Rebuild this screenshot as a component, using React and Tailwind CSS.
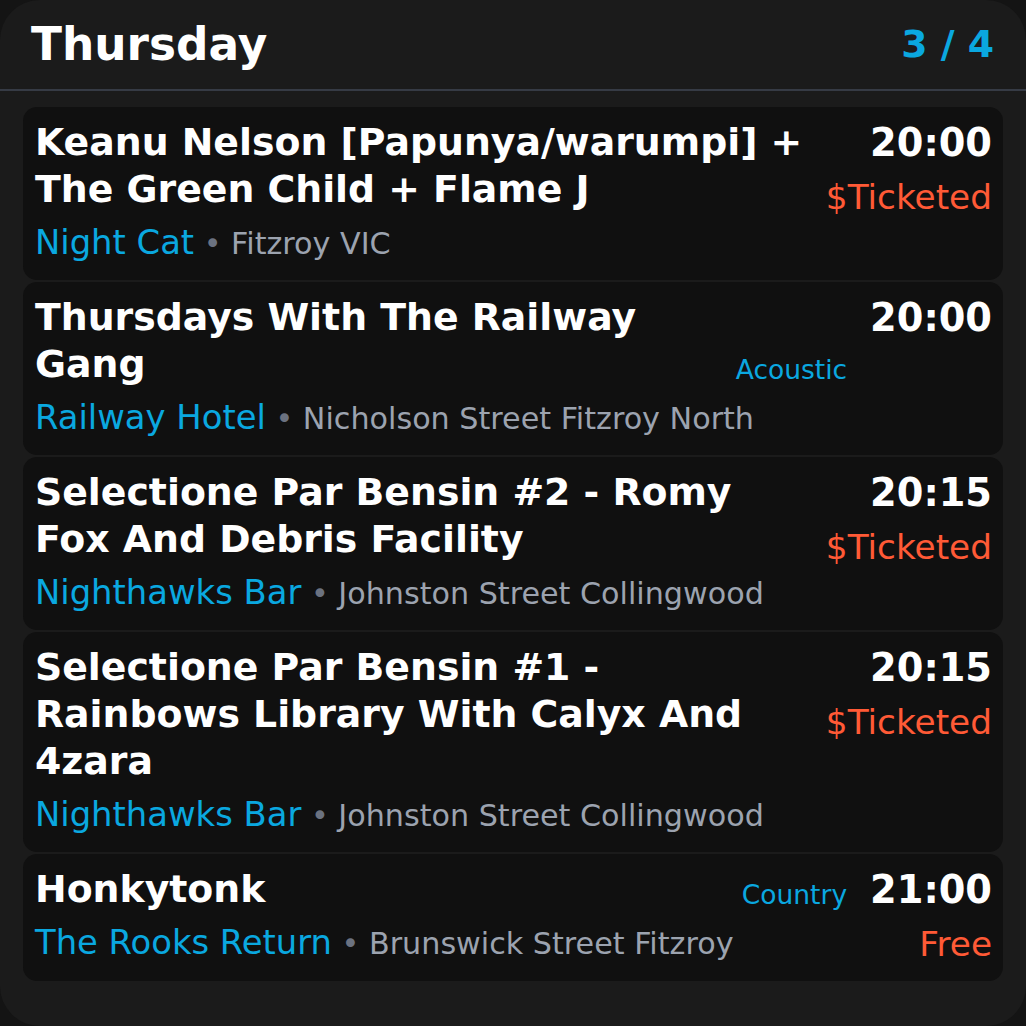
import React from "react";

const events = [
  { title: "Keanu Nelson [Papunya/warumpi] + The Green Child + Flame J", venue: "Night Cat", addr: "Fitzroy VIC", time: "20:00", price: "$Ticketed" },
  { title: "Thursdays With The Railway Gang", venue: "Railway Hotel", addr: "Nicholson Street Fitzroy North", time: "20:00", genre: "Acoustic" },
  { title: "Selectione Par Bensin #2 - Romy Fox And Debris Facility", venue: "Nighthawks Bar", addr: "Johnston Street Collingwood", time: "20:15", price: "$Ticketed" },
  { title: "Selectione Par Bensin #1 - Rainbows Library With Calyx And 4zara", venue: "Nighthawks Bar", addr: "Johnston Street Collingwood", time: "20:15", price: "$Ticketed" },
  { title: "Honkytonk", venue: "The Rooks Return", addr: "Brunswick Street Fitzroy", time: "21:00", price: "Free", genre: "Country" },
];

export default function App() {
  return (
    <div className="w-[1026px] h-[1026px] bg-[#141414] font-['DejaVu_Sans',sans-serif]">
      <div className="w-full h-full bg-[#1b1b1b] rounded-[40px] overflow-hidden flex flex-col">
        <div className="h-[91px] flex items-center justify-between pl-[31px] pr-[32px] border-b-2 border-[#363b45] shrink-0">
          <div className="text-white font-bold text-[45.4px] leading-none">Thursday</div>
          <div className="text-[#0aa8e0] font-bold text-[37.8px] leading-none">3 / 4</div>
        </div>
        <div className="flex flex-col gap-[2px] px-[23px] pt-[16px]">
          {events.map((e, i) => (
            <div key={i} className="bg-[#101010] rounded-[14px] flex gap-[20px] pl-[12px] pr-[11px] pt-[12px] pb-[13px]">
              <div className="flex-1 min-w-0 flex flex-col">
                <div className="flex items-end gap-[20px]">
                  <div className="flex-1 text-white font-bold text-[37.8px] leading-[47px]">{e.title}</div>
                  {e.genre && <div className="mr-[3px] text-[#0aa8e0] text-[26.5px] leading-[36px]">{e.genre}</div>}
                </div>
                <div className="mt-[6px] text-[33.8px] leading-[48px] whitespace-nowrap">
                  <span className="text-[#0aa8e0]">{e.venue}</span>
                  <span className="text-[#6b7280] text-[30.2px] leading-[30px]"> • </span>
                  <span className="text-[#9ca3af] text-[30.2px] leading-[30px]">{e.addr}</span>
                </div>
              </div>
              <div className="flex flex-col items-end shrink-0">
                <div className="text-white font-bold text-[38.3px] leading-[47px]">{e.time}</div>
                {e.price && <div className="mt-[7px] text-[#ff5a36] text-[34.3px] leading-[48px]">{e.price}</div>}
              </div>
            </div>
          ))}
        </div>
      </div>
    </div>
  );
}
